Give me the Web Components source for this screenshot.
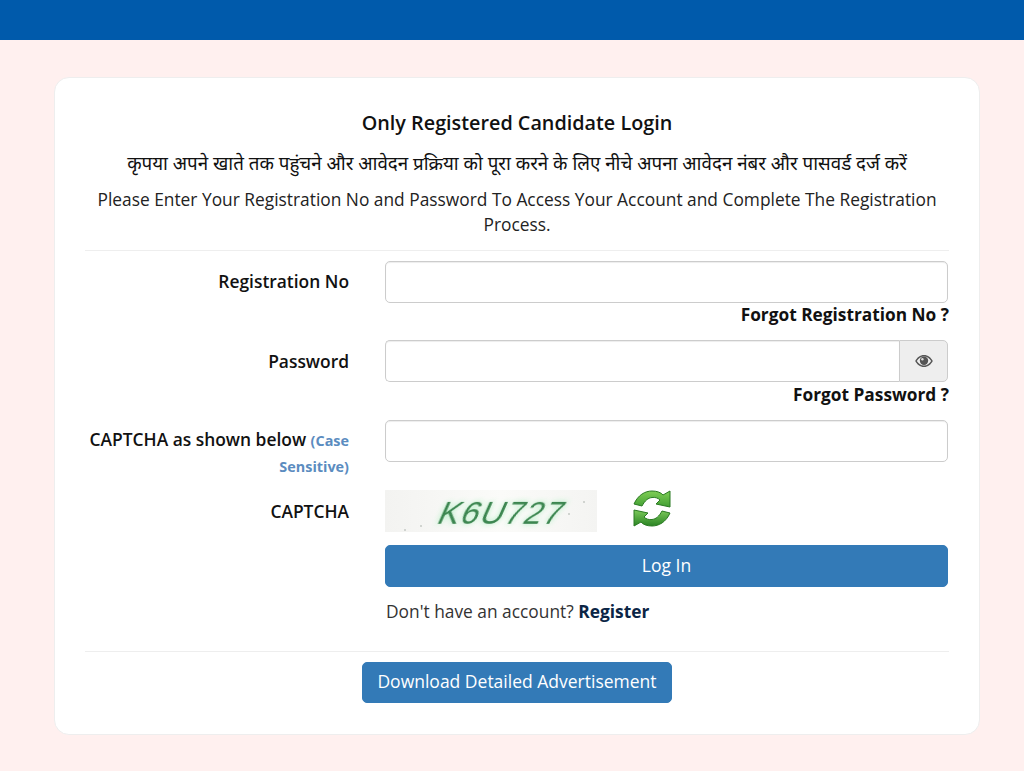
<!DOCTYPE html>
<html lang="en">
<head>
<meta charset="utf-8">
<title>Candidate Login</title>
<style>
html, body { margin: 0; padding: 0; }
body { background: #fff0ef; font-family: "Open Sans", "Noto Sans", sans-serif; color: #111; }
</style>
</head>
<body>
<login-page></login-page>

<script>
class TextInput extends HTMLElement {
    constructor() {
        super();
        this.shadowDOM = this.attachShadow({mode: "open"});
        this.shadowDOM.innerHTML = `
        <style>
        :host { display: flex; height: 42px; }
        input {
            flex: 1;
            min-width: 0;
            box-sizing: border-box;
            height: 42px;
            border: 1px solid #ccc;
            border-radius: 5px;
            background: #fff;
            padding: 6px 12px;
            box-shadow: inset 0 1px 1px rgba(0,0,0,.075);
            font: 16px "Open Sans", sans-serif;
        }
        :host([addon]) input { border-radius: 5px 0 0 5px; border-right: 0; }
        .addon {
            display: none;
            width: 49px;
            box-sizing: border-box;
            border: 1px solid #ccc;
            border-radius: 0 5px 5px 0;
            background: #eee;
            align-items: center;
            justify-content: center;
        }
        :host([addon]) .addon { display: flex; }
        </style>
        <input type="${this.getAttribute("type") || "text"}">
        <span class="addon">
            <svg width="18" height="14" viewBox="0 0 18 14">
                <path fill="#555" fill-rule="evenodd" d="M9 1C5 1 2 3.6.2 7 2 10.4 5 13 9 13s7-2.6 8.800-6C16 3.600 13 1 9 1zM9 2.400c-3 0-5.600 2-7.200 4.600C3.400 9.600 6 11.600 9 11.600s5.600-2 7.200-4.600C14.600 4.400 12 2.400 9 2.400z"/>
                <circle cx="9" cy="6.800" r="4.200" fill="#555"/>
                <circle cx="7.400" cy="5.200" r="1.200" fill="#ddd"/>
            </svg>
        </span>`;
    }
}
customElements.define("text-input", TextInput);

class FormRow extends HTMLElement {
    constructor() {
        super();
        this.shadowDOM = this.attachShadow({mode: "open"});
        this.shadowDOM.innerHTML = `
        <style>
        :host {
            display: grid;
            grid-template-columns: 264px 563px;
            column-gap: 36px;
        }
        .label {
            text-align: right;
            font-size: 17.400px;
            font-weight: 600;
            line-height: 26px;
            padding-top: var(--label-top, 7px);
            color: #111;
        }
        </style>
        <div class="label"><slot name="label"></slot></div>
        <div class="field"><slot></slot></div>`;
    }
}
customElements.define("form-row", FormRow);

class ActionButton extends HTMLElement {
    constructor() {
        super();
        this.shadowDOM = this.attachShadow({mode: "open"});
        this.shadowDOM.innerHTML = `
        <style>
        :host {
            display: inline-block;
            box-sizing: border-box;
            height: 42px;
            line-height: 39px;
            padding: 0 15px;
            text-align: center;
            background: #337ab7;
            border: 1px solid #337ab7;
            border-radius: 5px;
            color: #fff;
            font-size: 17.500px;
            cursor: pointer;
        }
        :host([slim]) { height: 41px; line-height: 37px; padding: 0 14.500px; }
        </style>
        <slot></slot>`;
    }
}
customElements.define("action-button", ActionButton);

class CaptchaBox extends HTMLElement {
    constructor() {
        super();
        this.shadowDOM = this.attachShadow({mode: "open"});
        this.shadowDOM.innerHTML = `
        <style>
        :host { display: flex; align-items: flex-start; height: 42px; }
        .image {
            position: relative;
            width: 212px;
            height: 42px;
            background: linear-gradient(90deg, #f3f3f1, #fbfbf9 55%, #f4f4f2);
            overflow: hidden;
            display: flex;
            justify-content: center;
        }
        .code {
            margin-left: 25px;
            display: inline-block;
            font: 32px/46px "Liberation Sans", sans-serif;
            letter-spacing: 1.500px;
            color: #3c8650;
            transform: skewX(-24deg);
            filter: blur(.7px);
            text-shadow: 0 0 6px #a0ecb6;
        }
        .speck { position: absolute; width: 2px; height: 2px; background: #c4c9c4; border-radius: 50%; }
        svg { margin-left: 35px; margin-top: -1px; }
        </style>
        <div class="image">
            <span class="code">K6U727</span>
            <i class="speck" style="left:19px;top:39px"></i>
            <i class="speck" style="left:35px;top:35px"></i>
            <i class="speck" style="left:183px;top:23px"></i>
            <i class="speck" style="left:198px;top:11px"></i>
        </div>
        <svg width="40" height="39" viewBox="0 0 40 39">
            <defs>
                <linearGradient id="g" gradientUnits="userSpaceOnUse" x1="0" y1="2" x2="0" y2="37">
                    <stop offset="0" stop-color="#7fce55"/>
                    <stop offset=".5" stop-color="#3c9a30"/>
                    <stop offset=".55" stop-color="#7cc95a"/>
                    <stop offset="1" stop-color="#2a8424"/>
                </linearGradient>
            </defs>
            <path fill="url(#g)" stroke="#2a7a22" d="M2 15C6 6 13 2 20 2c5 0 9 1.500 11 4l7-4v16l-14-3 4-4c-2-2-5-3-8-2.500-4 .5-7 3-10 8.500z"/>
            <path fill="url(#g)" stroke="#2a7a22" d="M38 24c-4 9-11 13-18 13-5 0-9-1.500-11-4l-7 4V21l14 3-4 4c2 2 5 3 8 2.500 4-.5 7-3 10-8.500z"/>
        </svg>`;
    }
}
customElements.define("captcha-box", CaptchaBox);

class LoginPage extends HTMLElement {
    constructor() {
        super();
        this.shadowDOM = this.attachShadow({mode: "open"});
        this.shadowDOM.innerHTML = `
        <style>
        :host { display: block; font-family: "Open Sans", "Noto Sans", sans-serif; }
        * { box-sizing: border-box; }
        .bar { height: 40px; background: #005aab; }
        .card {
            margin: 37px 44px 0 54px;
            height: 658px;
            background: #fff;
            border: 1px solid #eee;
            border-radius: 15px;
            padding: 30px;
        }
        .intro { text-align: center; }
        h1 {
            margin: 0;
            font-size: 19.800px;
            font-weight: 600;
            line-height: 30px;
        }
        .hindi { margin: 10px 0 0; font-size: 18.750px; line-height: 30px; }
        .english { margin: 9px 0 0; font-size: 17.350px; line-height: 25px; color: #222; }
        hr { border: 0; border-top: 1px solid #eee; margin: 0; }
        .first { margin-top: 13px; }
        form-row.one { margin-top: 10px; }
        .forgot {
            text-align: right;
            font-size: 17.300px;
            font-weight: 700;
            line-height: 24px;
            margin: 0 -1px 2px 0;
            color: #111;
        }
        .two { margin-top: 11px; --label-top: 8px; }
        .two .forgot { margin-top: 1px; }
        .three { margin-top: 11px; --label-top: 6px; }
        .four { margin-top: 12px; --label-top: 8px; }
        .five { margin-top: 13px; }
        .case { color: #5b8cc0; font-size: 14.400px; font-weight: 700; line-height: 1; }
        action-button.wide { display: block; }
        .signup { font-size: 17.350px; line-height: 26px; margin-top: 11px; color: #333; padding-left: 1px; }
        .signup b { color: #0b2545; font-weight: 700; }
        .last { margin-top: 27px; }
        .download { display: flex; justify-content: center; margin-top: 10px; }
        </style>
        <div class="bar"></div>
        <div class="card">
            <div class="intro">
                <h1>Only Registered Candidate Login</h1>
                <p class="hindi">कृपया अपने खाते तक पहुंचने और आवेदन प्रक्रिया को पूरा करने के लिए नीचे अपना आवेदन नंबर और पासवर्ड दर्ज करें</p>
                <p class="english">Please Enter Your Registration No and Password To Access Your Account and Complete The Registration Process.</p>
            </div>
            <hr class="first">
            <form-row class="one">
                <span slot="label">Registration No</span>
                <text-input></text-input>
                <div class="forgot">Forgot Registration No ?</div>
            </form-row>
            <form-row class="two">
                <span slot="label">Password</span>
                <text-input type="password" addon></text-input>
                <div class="forgot">Forgot Password ?</div>
            </form-row>
            <form-row class="three">
                <span slot="label">CAPTCHA as shown below <span class="case">(Case</span> <span class="case">Sensitive)</span></span>
                <text-input></text-input>
            </form-row>
            <form-row class="four">
                <span slot="label">CAPTCHA</span>
                <captcha-box></captcha-box>
            </form-row>
            <form-row class="five">
                <span slot="label"></span>
                <action-button class="wide">Log In</action-button>
                <div class="signup">Don't have an account? <b>Register</b></div>
            </form-row>
            <hr class="last">
            <div class="download"><action-button slim>Download Detailed Advertisement</action-button></div>
        </div>`;
    }
}
customElements.define("login-page", LoginPage);
</script>
</body>
</html>
